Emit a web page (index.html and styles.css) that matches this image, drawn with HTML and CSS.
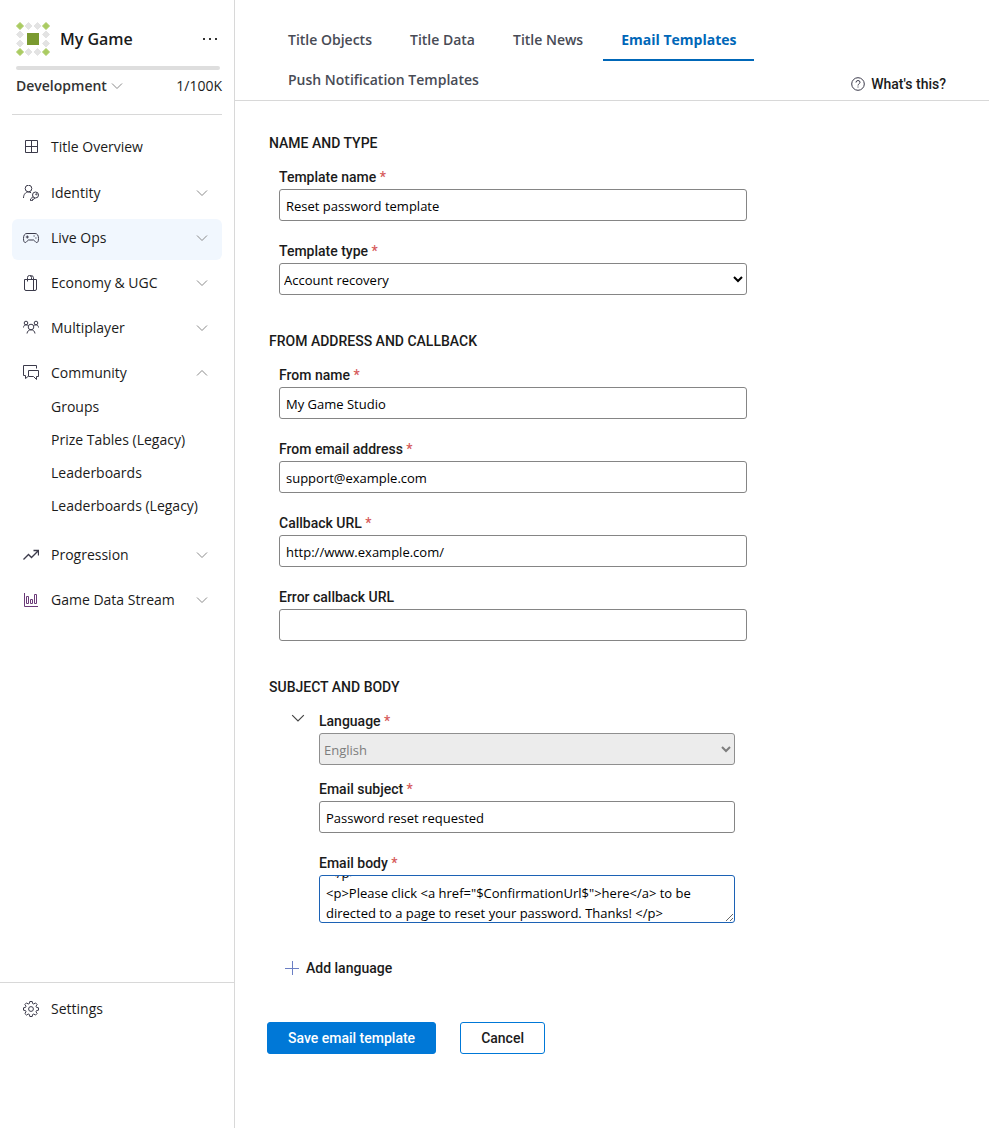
FILE: index.html
```html
<!DOCTYPE html>
<html lang="en">
<head>
<meta charset="utf-8">
<title>Email Templates - My Game</title>
<link rel="stylesheet" href="styles.css">
</head>

<body>
<!-- Shared shapes -->
<svg class="defs" aria-hidden="true">
  <symbol id="chevron" viewBox="0 0 12 8"><path d="M1 1.5l5 5 5-5"/></symbol>
</svg>

<div class="page">
<aside class="sidebar">
  <div class="game">
    <svg class="logo" viewBox="0 0 34 34">
      <g fill="#e3e3e3" stroke="#e3e3e3">
        <path d="M12.500 .5l3.500 3.500-3.500 3.500-3.500-3.500z"/><path d="M21.500 .5l3.500 3.500-3.500 3.500-3.500-3.500z"/>
        <path d="M12.500 26.500l3.500 3.500-3.500 3.500-3.500-3.500z"/><path d="M21.500 26.500l3.500 3.500-3.500 3.500-3.500-3.500z"/>
        <path d="M4 9l3.500 3.500-3.500 3.500-3.500-3.500z"/><path d="M4 18l3.500 3.500-3.500 3.500-3.500-3.500z"/>
        <path d="M30 9l3.500 3.500-3.500 3.500-3.500-3.500z"/><path d="M30 18l3.500 3.500-3.500 3.500-3.500-3.500z"/>
      </g>
      <g fill="#aacb62" stroke="#aacb62">
        <path d="M4 .5l3.500 3.500-3.500 3.500-3.500-3.500z"/><path d="M30 .5l3.500 3.500-3.500 3.500-3.500-3.500z"/>
        <path d="M4 26.500l3.500 3.500-3.500 3.500-3.500-3.500z"/><path d="M30 26.500l3.500 3.500-3.500 3.500-3.500-3.500z"/>
      </g>
      <path fill="#7a9a30" stroke="none" d="M11 11h12v12H11z"/>
    </svg>
    <strong class="game-name">My Game</strong>
    <button type="button" class="more" aria-label="More options">
      <svg viewBox="0 0 16 4"><path d="M1 1h2v2H1zM7 1h2v2H7zM13 1h2v2h-2z"/></svg>
    </button>
  </div>
  <div class="usage-bar"></div>
  <div class="plan">
    <button type="button" class="plan-name">Development <svg class="chevron"><use href="#chevron"/></svg></button>
    <span>1/100K</span>
  </div>

  <nav class="menu" aria-label="Main">
    <a href="#" class="menu-item overview">
      <svg class="icon" viewBox="0 0 16 16"><path d="M2.500 1.500h12v12h-12zM8.500 1.500v12M2.500 7.500h12"/></svg>
      <span>Title Overview</span>
    </a>
    <a href="#" class="menu-item">
      <svg class="icon" viewBox="0 0 16 16"><circle cx="5.500" cy="3.500" r="3.300"/><path d="M.5 13c0-3.500 2-6 5-6 1 0 2 .3 2.600 .8"/><circle cx="12.500" cy="10" r="3"/><circle cx="13.300" cy="9.300" r=".6"/><path d="M10.200 11.500L7.500 14v1.700h2v-1.400h1.300l1-1.400"/></svg>
      <span>Identity</span><svg class="chevron"><use href="#chevron"/></svg>
    </a>
    <a href="#" class="menu-item current">
      <svg class="icon" viewBox="0 0 16 16"><path d="M4 3.500h8c2.400 0 3.500 2 3.500 5 0 2.600-.6 4-1.800 4-1.300 0-2-2-3-2.500H5.300c-1 .5-1.700 2.500-3 2.500-1.200 0-1.800-1.400-1.800-4 0-3 1.100-5 3.500-5zM2.800 7h3M4.300 5.500v3M10.500 6h1.200M12.300 8h1.200"/></svg>
      <span>Live Ops</span><svg class="chevron"><use href="#chevron"/></svg>
    </a>
    <a href="#" class="menu-item">
      <svg class="icon" viewBox="0 0 16 16"><path d="M1.500 4.500h12v9.500q0 1.500-1.500 1.500H3q-1.500 0-1.500-1.500zM10.500 4.500V15.500M4.500 6.500V2.500q0-2 2-2t2 2v2M7 .8q3.500-.8 3.500 2v3.700"/></svg>
      <span>Economy &amp; UGC</span><svg class="chevron"><use href="#chevron"/></svg>
    </a>
    <a href="#" class="menu-item">
      <svg class="icon" viewBox="0 0 16 16"><circle cx="3" cy="3" r="1.800"/><circle cx="13" cy="3" r="1.800"/><circle cx="8" cy="7" r="2.800"/><path d="M.5 7.500c0-1.500 1-2.700 2.500-2.700 1 0 1.800.4 2.300 1M15.500 7.500c0-1.500-1-2.700-2.500-2.700-1 0-1.800.4-2.300 1M4 13.500c.3-2.300 1.800-3.700 4-3.700s3.700 1.400 4 3.700"/></svg>
      <span>Multiplayer</span><svg class="chevron"><use href="#chevron"/></svg>
    </a>
    <a href="#" class="menu-item">
      <svg class="icon" viewBox="0 0 16 16"><path d="M5 11.500L2.500 13.500v-3h-2v-10h13v3M5.500 11.500v-6h10v6h-2v3l-3-3z"/></svg>
      <span>Community</span><svg class="chevron up"><use href="#chevron"/></svg>
    </a>
    <ul class="submenu">
      <li><a href="#">Groups</a></li>
      <li><a href="#">Prize Tables (Legacy)</a></li>
      <li><a href="#">Leaderboards</a></li>
      <li><a href="#">Leaderboards (Legacy)</a></li>
    </ul>
    <a href="#" class="menu-item">
      <svg class="icon" viewBox="0 0 16 16"><path d="M.5 12.500L5.500 7.500l3 3L15 4M10.500 3.500h5v5" stroke-width="1.300"/></svg>
      <span>Progression</span><svg class="chevron"><use href="#chevron"/></svg>
    </a>
    <a href="#" class="menu-item">
      <svg class="icon purple" viewBox="0 0 16 16"><path d="M1.500 1v13.500H15M3.500 4.500h2v7h-2zM7.500 7.500h2v4h-2zM11.500 2.500h2v9h-2z"/></svg>
      <span>Game Data Stream</span><svg class="chevron"><use href="#chevron"/></svg>
    </a>
  </nav>

  <div class="sidebar-footer">
    <a href="#" class="menu-item">
      <svg class="icon" viewBox="0 0 16 16"><path d="M6.800 .5h2.400l.4 2 1.200.5 1.700-1.100 1.600 1.600L13 5.200l.5 1.200 2 .4v2.400l-2 .4-.5 1.200 1.100 1.700-1.600 1.600-1.700-1.100-1.200.5-.4 2H6.800l-.4-2-1.200-.5-1.700 1.100-1.600-1.600L3 10.800l-.5-1.200-2-.4V6.800l2-.4L3 5.200 1.900 3.500l1.600-1.600L5.200 3l1.200-.5z"/><circle cx="8" cy="8" r="2.400"/></svg>
      <span>Settings</span>
    </a>
  </div>
</aside>

<main class="content">
  <header class="topbar">
    <nav class="tabs" aria-label="Content">
      <a href="#">Title Objects</a>
      <a href="#">Title Data</a>
      <a href="#">Title News</a>
      <a href="#" class="active-tab" aria-current="page">Email Templates</a>
      <a href="#">Push Notification Templates</a>
    </nav>
    <a href="#" class="help">
      <svg viewBox="0 0 14 14"><circle cx="7" cy="7" r="6.300"/><path d="M5 5.500q0-2 2-2t2 1.800c0 1.500-2 1.500-2 3.200M7 9.500v1"/></svg>
      What's this?
    </a>
  </header>

  <form class="template-form">
    <section>
      <h2>Name and type</h2>
      <div class="field">
        <label for="template-name">Template name <span class="req">*</span></label>
        <input type="text" id="template-name" value="Reset password template">
      </div>
      <div class="field">
        <label for="template-type">Template type <span class="req">*</span></label>
        <select id="template-type"><option>Account recovery</option></select>
      </div>
    </section>

    <section>
      <h2>From address and callback</h2>
      <div class="field">
        <label for="from-name">From name <span class="req">*</span></label>
        <input type="text" id="from-name" value="My Game Studio">
      </div>
      <div class="field">
        <label for="from-email">From email address <span class="req">*</span></label>
        <input type="text" id="from-email" value="support@example.com">
      </div>
      <div class="field">
        <label for="callback">Callback URL <span class="req">*</span></label>
        <input type="text" id="callback" value="http://www.example.com/">
      </div>
      <div class="field">
        <label for="error-callback">Error callback URL</label>
        <input type="text" id="error-callback">
      </div>
    </section>

    <section>
      <h2>Subject and body</h2>
      <div class="language">
        <button type="button" class="collapse" aria-label="Collapse language"><svg class="chevron"><use href="#chevron"/></svg></button>
        <div class="language-fields">
          <div class="field tight">
            <label for="language">Language <span class="req">*</span></label>
            <select id="language" disabled><option>English</option></select>
          </div>
          <div class="field">
            <label for="subject">Email subject <span class="req">*</span></label>
            <input type="text" id="subject" value="Password reset requested">
          </div>
          <div class="field">
            <label for="email-body">Email body <span class="req">*</span></label>
            <textarea id="email-body" class="editing">
 &lt;/p&gt;
&lt;p&gt;Please click &lt;a href="$ConfirmationUrl$"&gt;here&lt;/a&gt; to be directed to a page to reset your password. Thanks! &lt;/p&gt;</textarea>
          </div>
        </div>
      </div>
      <button type="button" class="add">
        <svg viewBox="0 0 14 14"><path d="M7.500 0v14M0 7.500h14"/></svg>
        Add language
      </button>
    </section>

    <div class="actions">
      <button type="submit" class="primary">Save email template</button>
      <button type="button">Cancel</button>
    </div>
  </form>
</main>
</div>

<script>
// Show the end of the message
var body = document.getElementById('email-body');
body.scrollTop = body.scrollHeight - body.clientHeight - 1;
</script>
</body>
</html>
```
FILE: styles.css
```css
* {
    box-sizing: border-box;
}

body {
    margin: 0;
    background: #fff;
    color: #1b1b1b;
    font: 14px/20px "Open Sans", sans-serif;
}

a {
    color: inherit;
    text-decoration: none;
}

button {
    padding: 0;
    border: 0;
    background: none;
    color: inherit;
    font: inherit;
}

svg {
    display: block;
    flex: none;
    fill: none;
    stroke: #3b3a4a;
}

.defs {
    display: none;
}

.page {
    display: flex;
    min-height: 100vh;
}

/* Sidebar */
.sidebar {
    display: flex;
    flex-direction: column;
    flex: 0 0 235px;
    border-right: 1px solid #d8d8d8;
    padding-top: 22px;
}

.game {
    display: flex;
    align-items: center;
    gap: 10px;
    padding: 0 16px;
}

.logo {
    width: 34px;
    height: 34px;
    stroke-linejoin: round;
}

.game-name {
    flex: 1;
    font-size: 16px;
    line-height: 22px;
    font-weight: 600;
}

.more svg {
    width: 16px;
    height: 4px;
    fill: #333;
    stroke: none;
}

.usage-bar {
    height: 4px;
    margin: 10px 14px 0 16px;
    border-radius: 2px;
    background: #dedede;
}

.plan {
    display: flex;
    justify-content: space-between;
    margin: 0 12px;
    padding: 6px 0 18px 4px;
    border-bottom: 1px solid #d8d8d8;
}

.plan-name {
    display: flex;
    align-items: center;
    gap: 4px;
    color: #333;
    font-weight: 600;
}

.chevron {
    width: 12px;
    height: 8px;
    stroke: #8a8a8a;
}

.up {
    transform: rotate(180deg);
}

.menu {
    flex: 1;
    padding: 11px 12px 0 12px;
}

.menu-item {
    display: flex;
    align-items: center;
    gap: 12px;
    height: 41px;
    margin-bottom: 4px;
    padding: 0 14px 4px 11px;
    border-radius: 6px;
}

.menu-item span {
    flex: 1;
}

.overview {
    margin-bottom: 7px;
    padding-bottom: 0;
}

.current {
    background: #f1f7fe;
}

.icon {
    width: 16px;
    height: 16px;
}

.purple {
    stroke: #6b3a78;
}

.submenu {
    margin: -8px 0 13px 0;
    padding: 0 0 0 39px;
    list-style: none;
}

.submenu a {
    display: block;
    padding: 6px 0 7px 0;
}

.sidebar-footer {
    min-height: 146px;
    padding: 7px 12px;
    border-top: 1px solid #d8d8d8;
}

/* Top tabs */
.content {
    flex: 1;
    min-width: 0;
}

.topbar {
    display: flex;
    justify-content: space-between;
    align-items: flex-end;
    padding: 20px 43px 0 35px;
    border-bottom: 1px solid #d8d8d8;
}

.tabs {
    display: flex;
    flex-wrap: wrap;
    flex: 1;
    column-gap: 2px;
    color: #484b55;
    font-weight: 600;
}

.tabs a {
    height: 40px;
    padding: 10px 18px;
}

.tabs .active-tab {
    height: 41px;
    margin-bottom: -1px;
    border-bottom: 2px solid #0067b8;
    color: #0067b8;
    font-weight: 700;
}

.help {
    display: flex;
    align-items: center;
    gap: 6px;
    padding-bottom: 6px;
    font: 500 14px/20px Roboto, sans-serif;
}

.help svg {
    width: 14px;
    height: 14px;
}

/* Form */
.template-form {
    max-width: 512px;
    padding: 32px 0 74px 32px;
}

h2 {
    margin: 0 0 12px 2px;
    font: 500 14px/20px Roboto, sans-serif;
    text-transform: uppercase;
}

section {
    margin-bottom: 36px;
}

.field {
    margin: 0 0 18px 12px;
}

section > .field:last-child {
    margin-bottom: 0;
}

label {
    display: block;
    font: 500 14px/24px Roboto, sans-serif;
}

.req {
    color: #d65a5a;
}

input, select, textarea {
    display: block;
    width: 100%;
    height: 32px;
    border: 1px solid #858585;
    border-radius: 3px;
    background: #fff;
    color: #000;
    font: 13px/20px "Open Sans", sans-serif;
}

input {
    padding: 2px 6px 0 6px;
}

select {
    padding: 2px 0 0 0;
}

select:disabled {
    border-color: #8f8f8f;
    background: #ececec;
    color: #7d7d7d;
    opacity: 1;
}

textarea {
    height: 48px;
    padding: 0 6px;
    overflow: hidden;
    resize: both;
}

.editing {
    border-color: #1c62b5;
}

.language {
    display: flex;
    gap: 14px;
    padding: 0 12px 0 24px;
}

.language-fields {
    flex: 1;
}

.language .field {
    margin-left: 0;
}

.language .tight {
    margin-bottom: 12px;
}

.collapse {
    align-self: flex-start;
    padding-top: 4px;
}

.collapse svg {
    width: 14px;
    height: 10px;
    stroke: #444;
}

.add {
    display: flex;
    align-items: center;
    gap: 7px;
    margin: 17px 0 0 18px;
    font: 500 14px/20px Roboto, sans-serif;
}

.add svg {
    width: 14px;
    height: 14px;
    stroke: #6b7fc4;
}

.actions {
    display: flex;
    gap: 24px;
    padding-top: 8px;
}

.actions button {
    height: 32px;
    padding: 0 20px;
    border: 1px solid #0078d7;
    border-radius: 3px;
    font: 500 14px/20px Roboto, sans-serif;
}

.actions .primary {
    background: #0078d7;
    color: #fff;
}
```
